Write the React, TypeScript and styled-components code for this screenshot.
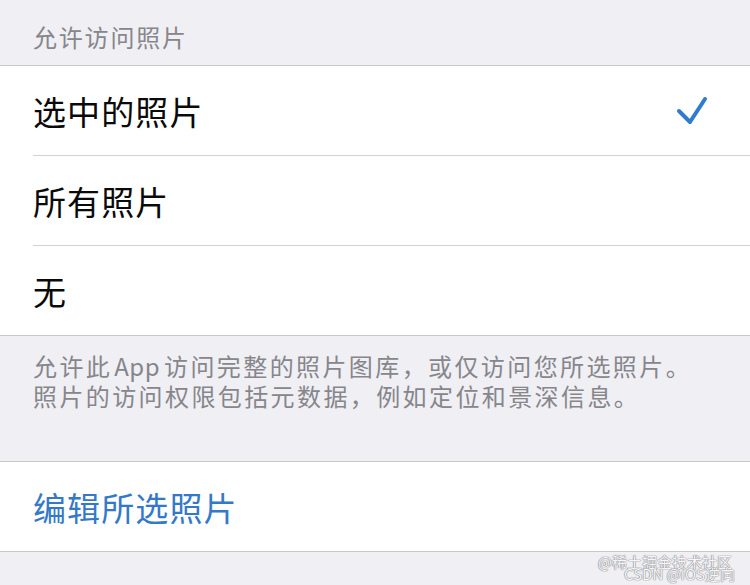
import { createGlobalStyle } from "styled-components";
import styled from "styled-components";

const GlobalStyle = createGlobalStyle`
  html, body {
    margin: 0;
    padding: 0;
    background: #efeff4;
  }
  body {
    font-family: "Noto Sans CJK SC", "Noto Sans", sans-serif;
    -webkit-font-smoothing: antialiased;
  }
`;

const Page = styled.div`
  position: relative;
  width: 750px;
  height: 585px;
  overflow: hidden;
  background: #efeff4;
`;

const SectionHeader = styled.div`
  padding: 22px 33px 13px;
  font-size: 24px;
  line-height: 30px;
  letter-spacing: 1.8px;
  color: #86868b;
`;

const Group = styled.div`
  background: #ffffff;
  border-top: 1px solid #c8c7cc;
  border-bottom: 1px solid #c8c7cc;
`;

const Row = styled.div<{ $last?: boolean }>`
  display: flex;
  align-items: center;
  justify-content: space-between;
  height: 89px;
  margin-left: 33px;
  padding-right: 42px;
  border-bottom: ${(p) => (p.$last ? "none" : "1px solid #d1d1d6")};
`;

const Label = styled.span<{ $link?: boolean }>`
  font-size: 33px;
  line-height: 40px;
  letter-spacing: 1.1px;
  color: ${(p) => (p.$link ? "#3479c9" : "#0a0a0a")};
`;

const Footer = styled.div`
  height: 125px;
  box-sizing: border-box;
  padding: 15px 33px 0;
  font-size: 24px;
  line-height: 30px;
  letter-spacing: 2.4px;
  color: #86868b;
`;

const Latin = styled.span`
  letter-spacing: 0.5px;
  margin: 0 4px 0 2px;
`;

const Watermark = styled.div`
  position: absolute;
  right: 15px;
  bottom: 5px;
  display: flex;
  flex-direction: column;
  align-items: flex-end;
  font-size: 15px;
  line-height: 12px;
  color: #f6f6f8;
  text-shadow: 0 0 1px #8a8a8e, 0 0 1px #8a8a8e, 0 0 1px #8a8a8e;
  pointer-events: none;
`;

const WatermarkLine = styled.span<{ $shift?: number }>`
  margin-right: ${(p) => p.$shift ?? 0}px;
`;

const Check = () => (
  <svg width="32" height="30" viewBox="0 0 32 30" fill="none">
    <polyline
      points="3,15 14,26 29,3"
      stroke="#2f7bd1"
      strokeWidth="4"
      strokeLinecap="round"
      strokeLinejoin="round"
    />
  </svg>
);

const options = [
  { label: "选中的照片", checked: true },
  { label: "所有照片", checked: false },
  { label: "无", checked: false },
];

export default function App() {
  return (
    <Page>
      <GlobalStyle />
      <SectionHeader>允许访问照片</SectionHeader>
      <Group>
        {options.map((o, i) => (
          <Row key={o.label} $last={i === options.length - 1}>
            <Label>{o.label}</Label>
            {o.checked && <Check />}
          </Row>
        ))}
      </Group>
      <Footer>
        允许此<Latin>App</Latin>访问完整的照片图库，或仅访问您所选照片。
        <br />
        照片的访问权限包括元数据，例如定位和景深信息。
      </Footer>
      <Group>
        <Row $last>
          <Label $link>编辑所选照片</Label>
        </Row>
      </Group>
      <Watermark>
        <WatermarkLine $shift={3}>@稀土掘金技术社区</WatermarkLine>
        <WatermarkLine>CSDN @iOS逆向</WatermarkLine>
      </Watermark>
    </Page>
  );
}
